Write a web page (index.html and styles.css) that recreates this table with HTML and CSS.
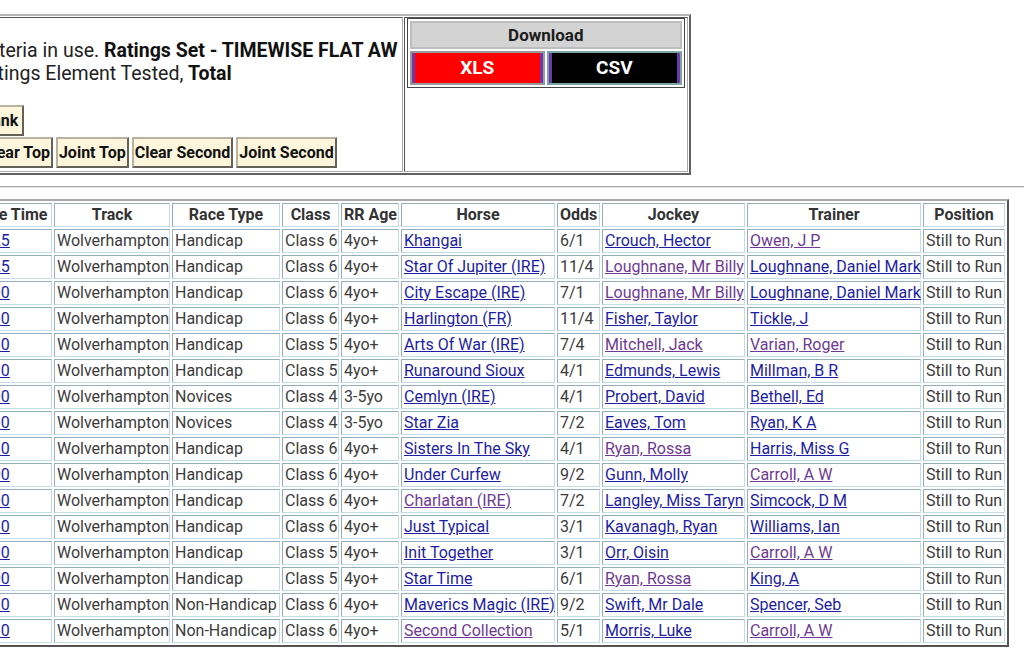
FILE: index.html
```html
<!DOCTYPE html>
<html>
<head>
<meta charset="utf-8">
<title>Race Results</title>
<link rel="stylesheet" href="styles.css">
</head>
<body>
<div class="page">
  <table class="top">
    <tr>
      <td class="criteria">
        <div class="crit-text">Criteria in use. <b>Ratings Set - TIMEWISE FLAT AW</b><br>Ratings Element Tested, <b>Total</b></div>
        <div class="btn-row first"><button class="btn">Rank</button></div>
        <div class="btn-row"><button class="btn">Clear Top</button><button class="btn">Joint Top</button><button class="btn">Clear Second</button><button class="btn">Joint Second</button></div>
      </td>
      <td class="download-cell">
        <table class="download">
          <tr><th colspan="2" class="dl-head">Download</th></tr>
          <tr>
            <td class="dl-btn-cell"><div class="dl-btn xls">XLS</div></td>
            <td class="dl-btn-cell csv-cell"><div class="dl-btn csv">CSV</div></td>
          </tr>
        </table>
      </td>
    </tr>
  </table>
  <hr class="sep">
  <table class="races">
    <thead>
      <tr>
        <th class="w-time">Race Time</th>
        <th class="w-track">Track</th>
        <th class="w-type">Race Type</th>
        <th class="w-class">Class</th>
        <th class="w-age">RR Age</th>
        <th class="w-horse">Horse</th>
        <th class="w-odds">Odds</th>
        <th class="w-jockey">Jockey</th>
        <th class="w-trainer">Trainer</th>
        <th class="w-pos">Position</th>
      </tr>
    </thead>
    <tbody>
      <tr><td><a href="#">13:25</a></td><td>Wolverhampton</td><td>Handicap</td><td>Class 6</td><td>4yo+</td><td><a href="#">Khangai</a></td><td>6/1</td><td><a href="#">Crouch, Hector</a></td><td><a class="v" href="#">Owen, J P</a></td><td>Still to Run</td></tr>
      <tr><td><a href="#">13:25</a></td><td>Wolverhampton</td><td>Handicap</td><td>Class 6</td><td>4yo+</td><td><a href="#">Star Of Jupiter (IRE)</a></td><td>11/4</td><td><a class="v" href="#">Loughnane, Mr Billy</a></td><td><a href="#">Loughnane, Daniel Mark</a></td><td>Still to Run</td></tr>
      <tr><td><a href="#">14:00</a></td><td>Wolverhampton</td><td>Handicap</td><td>Class 6</td><td>4yo+</td><td><a href="#">City Escape (IRE)</a></td><td>7/1</td><td><a class="v" href="#">Loughnane, Mr Billy</a></td><td><a href="#">Loughnane, Daniel Mark</a></td><td>Still to Run</td></tr>
      <tr><td><a href="#">14:00</a></td><td>Wolverhampton</td><td>Handicap</td><td>Class 6</td><td>4yo+</td><td><a href="#">Harlington (FR)</a></td><td>11/4</td><td><a href="#">Fisher, Taylor</a></td><td><a href="#">Tickle, J</a></td><td>Still to Run</td></tr>
      <tr><td><a href="#">14:30</a></td><td>Wolverhampton</td><td>Handicap</td><td>Class 5</td><td>4yo+</td><td><a href="#">Arts Of War (IRE)</a></td><td>7/4</td><td><a class="v" href="#">Mitchell, Jack</a></td><td><a class="v" href="#">Varian, Roger</a></td><td>Still to Run</td></tr>
      <tr><td><a href="#">14:30</a></td><td>Wolverhampton</td><td>Handicap</td><td>Class 5</td><td>4yo+</td><td><a href="#">Runaround Sioux</a></td><td>4/1</td><td><a href="#">Edmunds, Lewis</a></td><td><a href="#">Millman, B R</a></td><td>Still to Run</td></tr>
      <tr><td><a href="#">15:00</a></td><td>Wolverhampton</td><td>Novices</td><td>Class 4</td><td>3-5yo</td><td><a href="#">Cemlyn (IRE)</a></td><td>4/1</td><td><a href="#">Probert, David</a></td><td><a href="#">Bethell, Ed</a></td><td>Still to Run</td></tr>
      <tr><td><a href="#">15:00</a></td><td>Wolverhampton</td><td>Novices</td><td>Class 4</td><td>3-5yo</td><td><a href="#">Star Zia</a></td><td>7/2</td><td><a href="#">Eaves, Tom</a></td><td><a href="#">Ryan, K A</a></td><td>Still to Run</td></tr>
      <tr><td><a href="#">15:30</a></td><td>Wolverhampton</td><td>Handicap</td><td>Class 6</td><td>4yo+</td><td><a href="#">Sisters In The Sky</a></td><td>4/1</td><td><a class="v" href="#">Ryan, Rossa</a></td><td><a href="#">Harris, Miss G</a></td><td>Still to Run</td></tr>
      <tr><td><a href="#">16:00</a></td><td>Wolverhampton</td><td>Handicap</td><td>Class 6</td><td>4yo+</td><td><a href="#">Under Curfew</a></td><td>9/2</td><td><a href="#">Gunn, Molly</a></td><td><a class="v" href="#">Carroll, A W</a></td><td>Still to Run</td></tr>
      <tr><td><a href="#">16:00</a></td><td>Wolverhampton</td><td>Handicap</td><td>Class 6</td><td>4yo+</td><td><a class="v" href="#">Charlatan (IRE)</a></td><td>7/2</td><td><a href="#">Langley, Miss Taryn</a></td><td><a href="#">Simcock, D M</a></td><td>Still to Run</td></tr>
      <tr><td><a href="#">16:30</a></td><td>Wolverhampton</td><td>Handicap</td><td>Class 6</td><td>4yo+</td><td><a href="#">Just Typical</a></td><td>3/1</td><td><a href="#">Kavanagh, Ryan</a></td><td><a href="#">Williams, Ian</a></td><td>Still to Run</td></tr>
      <tr><td><a href="#">17:00</a></td><td>Wolverhampton</td><td>Handicap</td><td>Class 5</td><td>4yo+</td><td><a href="#">Init Together</a></td><td>3/1</td><td><a href="#">Orr, Oisin</a></td><td><a class="v" href="#">Carroll, A W</a></td><td>Still to Run</td></tr>
      <tr><td><a href="#">17:00</a></td><td>Wolverhampton</td><td>Handicap</td><td>Class 5</td><td>4yo+</td><td><a href="#">Star Time</a></td><td>6/1</td><td><a class="v" href="#">Ryan, Rossa</a></td><td><a href="#">King, A</a></td><td>Still to Run</td></tr>
      <tr><td><a href="#">17:30</a></td><td>Wolverhampton</td><td>Non-Handicap</td><td>Class 6</td><td>4yo+</td><td><a href="#">Maverics Magic (IRE)</a></td><td>9/2</td><td><a href="#">Swift, Mr Dale</a></td><td><a href="#">Spencer, Seb</a></td><td>Still to Run</td></tr>
      <tr><td><a href="#">17:30</a></td><td>Wolverhampton</td><td>Non-Handicap</td><td>Class 6</td><td>4yo+</td><td><a class="v" href="#">Second Collection</a></td><td>5/1</td><td><a href="#">Morris, Luke</a></td><td><a class="v" href="#">Carroll, A W</a></td><td>Still to Run</td></tr>
    </tbody>
  </table>
</div>
</body>
</html>
```

FILE: styles.css
```css
html, body {
  margin: 0;
  padding: 0;
  overflow: hidden;
  background: #fff;
}
body {
  font-family: Roboto, "Liberation Sans", Arial, sans-serif;
  color: #333;
}
.page {
  margin: 14px 0 0 -38px;
  width: 1100px;
}

/* top panel */
.top {
  border: 2px outset #b5b5b5;
  border-spacing: 1px;
  width: 729px;
}
.top > tbody > tr > td {
  border: 1px inset #a8a8a8;
  vertical-align: top;
  padding: 0;
}
.criteria {
  width: 434px;
  height: 153px;
}
.crit-text {
  font-size: 19.5px;
  line-height: 23px;
  color: #222;
  padding: 21px 0 0 9px;
  white-space: nowrap;
}
.crit-text b { color: #111; }
.btn-row {
  display: flex;
  gap: 3px;
  padding-left: 13px;
}
.btn-row.first {
  margin-top: 20px;
}
.btn-row + .btn-row { margin-top: 1px; }
.btn {
  font-family: Roboto, "Liberation Sans", Arial, sans-serif;
  font-weight: bold;
  font-size: 16px;
  color: #111;
  background: #fdf6dc;
  border: 2px outset #b9b2a0;
  padding: 4px 1px 3px;
  line-height: 20px;
  margin: 0;
}
.first .btn {
  padding-right: 4px;
}

/* download box */
.download-cell {
  width: 281px;
}
.download {
  margin: 0 1px 0 2px;
  width: 278px;
  border: 1px solid #444;
  border-spacing: 2px;
}
.dl-head {
  background: #d3d3d3;
  border: 2px solid #bdbdbd;
  font-size: 17px;
  font-weight: bold;
  color: #1c1c1c;
  height: 24px;
  padding: 0;
}
.dl-btn-cell {
  border: 2px solid #9a9a9a;
  padding: 0;
  width: 50%;
}
.csv-cell { border-color: #7da3a3; }
.dl-btn {
  font-size: 19px;
  font-weight: bold;
  color: #fff;
  text-align: center;
  height: 30px;
  line-height: 30px;
  border-left: 3px solid #6b3aa8;
  border-right: 3px solid #6b3aa8;
}
.xls { background: #ff0000; }
.csv { background: #000; }

.sep {
  margin: 11px 0 11px;
  border: 0;
  border-top: 1px solid #a9a9a9;
  border-bottom: 1px solid #e2e2e2;
  height: 0;
}

/* races table */
.races {
  table-layout: fixed;
  width: 1046px;
  margin-left: 1px;
  border: 2px outset #a8a8a8;
  border-spacing: 2px;
  font-size: 16px;
  white-space: nowrap;
}
.races th, .races td {
  box-sizing: border-box;
  height: 24px;
  line-height: 20px;
  padding: 1px 2px;
  border: 1px solid;
  border-color: #95aebb #c4dbe6 #c4dbe6 #95aebb;
  text-align: left;
  vertical-align: middle;
  overflow: visible;
}
.races th {
  text-align: center;
  font-weight: bold;
  color: #333;
}
.races td { color: #3c3c3c; }
.races a { color: #1e1ea2; text-decoration: underline; }
.races a.v { color: #6e3a93; }

.w-time { width: 85px; }
.w-track { width: 116px; }
.w-type { width: 108px; }
.w-class { width: 57px; }
.w-age { width: 58px; }
.w-horse { width: 154px; }
.w-odds { width: 43px; }
.w-jockey { width: 143px; }
.w-trainer { width: 174px; }
.w-pos { width: 82px; }
```
